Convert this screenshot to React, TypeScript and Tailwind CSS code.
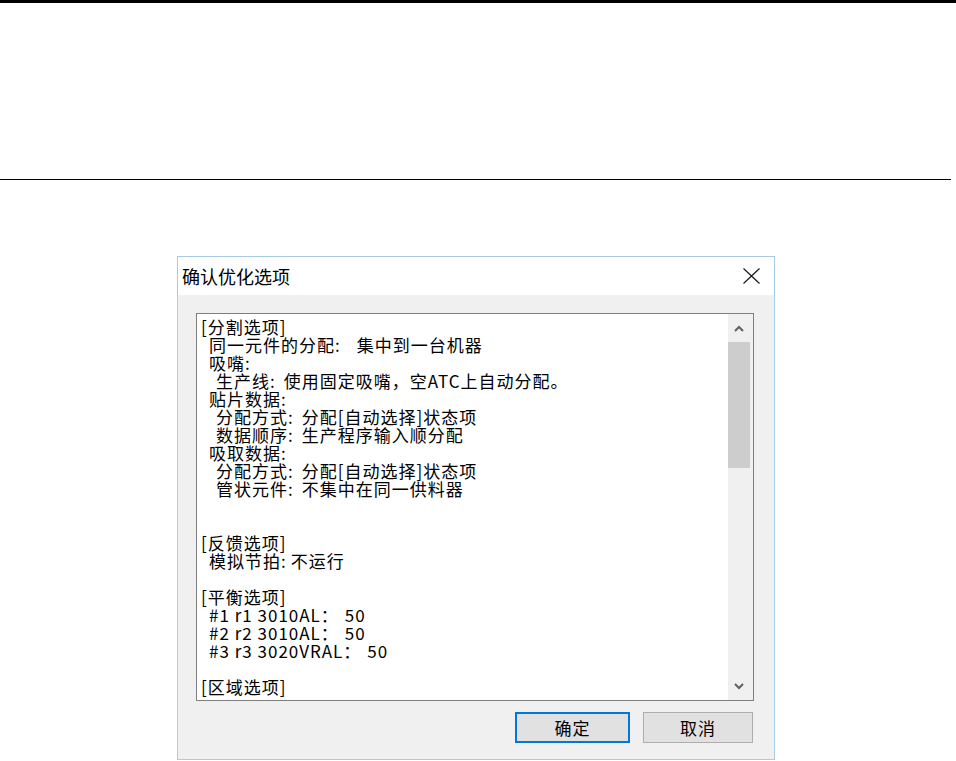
import React from "react";

type Line = { level: 0 | 1 | 2; label?: string; gap?: number; value?: string };

const lines: Line[] = [
  { level: 0, label: "[分割选项]" },
  { level: 1, label: "同一元件的分配:", gap: 16, value: "集中到一台机器" },
  { level: 1, label: "吸嘴:" },
  { level: 2, label: "生产线:", gap: 8, value: "使用固定吸嘴，空ATC上自动分配。" },
  { level: 1, label: "贴片数据:" },
  { level: 2, label: "分配方式:", gap: 8, value: "分配[自动选择]状态项" },
  { level: 2, label: "数据顺序:", gap: 8, value: "生产程序输入顺分配" },
  { level: 1, label: "吸取数据:" },
  { level: 2, label: "分配方式:", gap: 8, value: "分配[自动选择]状态项" },
  { level: 2, label: "管状元件:", gap: 8, value: "不集中在同一供料器" },
  { level: 0 },
  { level: 0 },
  { level: 0, label: "[反馈选项]" },
  { level: 1, label: "模拟节拍:", gap: 4, value: "不运行" },
  { level: 0 },
  { level: 0, label: "[平衡选项]" },
  { level: 1, label: "#1 r1 3010AL：", gap: 6, value: "50" },
  { level: 1, label: "#2 r2 3010AL：", gap: 6, value: "50" },
  { level: 1, label: "#3 r3 3020VRAL：", gap: 6, value: "50" },
  { level: 0 },
  { level: 0, label: "[区域选项]" },
];

const indent = ["pl-0", "pl-[8px]", "pl-[15px]"];

function Chevron({ up }: { up?: boolean }) {
  return (
    <svg width="10" height="7" viewBox="0 0 10 7">
      <path
        d={up ? "M1 6 L5 2 L9 6" : "M1 1 L5 5 L9 1"}
        fill="none"
        stroke="#606060"
        strokeWidth="2"
      />
    </svg>
  );
}

export default function App() {
  return (
    <div
      className="min-h-[761px] bg-white text-black"
      style={{ fontFamily: '"Noto Sans CJK SC", "Noto Sans", sans-serif' }}
    >
      <div className="h-[3px] w-full bg-black" />
      <div className="mt-[176px] h-px w-[951px] bg-black" />

      <div className="ml-[177px] mt-[76px] flex h-[504px] w-[598px] flex-col border border-[#a8cbe5] bg-[#f0f0f0]">
        {/* title bar */}
        <div className="flex h-[38px] items-center justify-between bg-white">
          <span className="pl-[4px] text-[18px] leading-none">确认优化选项</span>
          <button className="flex h-full w-[46px] items-center justify-center">
            <svg width="17" height="16" viewBox="0 0 17 16">
              <path d="M0.5 0.5 L16.5 15.5 M16.5 0.5 L0.5 15.5" stroke="#111" strokeWidth="1.1" />
            </svg>
          </button>
        </div>

        {/* body */}
        <div className="flex flex-1 flex-col pl-[18px] pr-[20px] pt-[18px]">
          <div className="flex h-[388px] border border-[#7e7e7e] bg-white">
            <div className="flex-1 overflow-hidden pl-[4px] pt-[4px] text-[17px] leading-[18px] tracking-[1px]">
              {lines.map((l, i) => (
                <div key={i} className={`h-[18px] whitespace-pre ${indent[l.level]}`}>
                  {l.label}
                  {l.value && (
                    <span style={{ marginLeft: l.gap }}>{l.value}</span>
                  )}
                </div>
              ))}
            </div>
            <div className="flex w-[25px] flex-col bg-[#f0f0f0]">
              <div className="flex h-[28px] items-center justify-center pr-[3px]">
                <Chevron up />
              </div>
              <div className="ml-0 h-[126px] w-[22px] bg-[#cdcdcd]" />
              <div className="flex-1" />
              <div className="flex h-[28px] items-center justify-center pr-[3px]">
                <Chevron />
              </div>
            </div>
          </div>

          <div className="mr-[1px] mt-[11px] flex justify-end gap-[13px]">
            <button className="flex h-[31px] w-[115px] items-center justify-center border-2 border-[#0078d7] bg-[#e1e1e1] text-[17px] tracking-[1px]">
              确定
            </button>
            <button className="flex h-[31px] w-[110px] items-center justify-center border border-[#adadad] bg-[#e1e1e1] text-[17px] tracking-[1px]">
              取消
            </button>
          </div>
        </div>
      </div>
    </div>
  );
}
